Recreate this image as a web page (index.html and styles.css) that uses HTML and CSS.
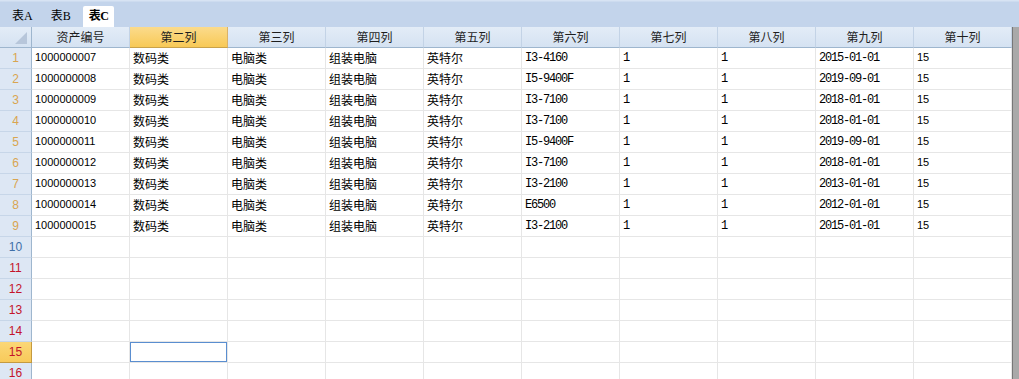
FILE: index.html
```html
<!DOCTYPE html>
<html>

<head>
    <title>表C</title>
    <link rel="stylesheet" href="styles.css">
</head>

<body>

    <div class="tabs">
        <div class="tab">表A</div>
        <div class="tab">表B</div>
        <div class="tab active">表C</div>
    </div>

    <div class="main">
        <div class="sheet">
            <div class="row head">
                <div class="corner">
                    <svg width="12" height="12" viewBox="0 0 12 12"><polygon points="12,0 12,12 0,12" fill="#b7c6da" /></svg>
                </div>
                <div class="col">资产编号</div>
                <div class="col sel">第二列</div>
                <div class="col">第三列</div>
                <div class="col">第四列</div>
                <div class="col">第五列</div>
                <div class="col">第六列</div>
                <div class="col">第七列</div>
                <div class="col">第八列</div>
                <div class="col">第九列</div>
                <div class="col">第十列</div>
            </div>

            <div class="row">
                <div class="num filled">1</div>
                <div class="cell sans">1000000007</div><div class="cell">数码类</div><div class="cell">电脑类</div><div class="cell">组装电脑</div><div class="cell">英特尔</div>
                <div class="cell mono">I3-4160</div><div class="cell mono">1</div><div class="cell mono">1</div><div class="cell mono">2015-01-01</div><div class="cell sans">15</div>
            </div>
            <div class="row">
                <div class="num filled">2</div>
                <div class="cell sans">1000000008</div><div class="cell">数码类</div><div class="cell">电脑类</div><div class="cell">组装电脑</div><div class="cell">英特尔</div>
                <div class="cell mono">I5-9400F</div><div class="cell mono">1</div><div class="cell mono">1</div><div class="cell mono">2019-09-01</div><div class="cell sans">15</div>
            </div>
            <div class="row">
                <div class="num filled">3</div>
                <div class="cell sans">1000000009</div><div class="cell">数码类</div><div class="cell">电脑类</div><div class="cell">组装电脑</div><div class="cell">英特尔</div>
                <div class="cell mono">I3-7100</div><div class="cell mono">1</div><div class="cell mono">1</div><div class="cell mono">2018-01-01</div><div class="cell sans">15</div>
            </div>
            <div class="row">
                <div class="num filled">4</div>
                <div class="cell sans">1000000010</div><div class="cell">数码类</div><div class="cell">电脑类</div><div class="cell">组装电脑</div><div class="cell">英特尔</div>
                <div class="cell mono">I3-7100</div><div class="cell mono">1</div><div class="cell mono">1</div><div class="cell mono">2018-01-01</div><div class="cell sans">15</div>
            </div>
            <div class="row">
                <div class="num filled">5</div>
                <div class="cell sans">1000000011</div><div class="cell">数码类</div><div class="cell">电脑类</div><div class="cell">组装电脑</div><div class="cell">英特尔</div>
                <div class="cell mono">I5-9400F</div><div class="cell mono">1</div><div class="cell mono">1</div><div class="cell mono">2019-09-01</div><div class="cell sans">15</div>
            </div>
            <div class="row">
                <div class="num filled">6</div>
                <div class="cell sans">1000000012</div><div class="cell">数码类</div><div class="cell">电脑类</div><div class="cell">组装电脑</div><div class="cell">英特尔</div>
                <div class="cell mono">I3-7100</div><div class="cell mono">1</div><div class="cell mono">1</div><div class="cell mono">2018-01-01</div><div class="cell sans">15</div>
            </div>
            <div class="row">
                <div class="num filled">7</div>
                <div class="cell sans">1000000013</div><div class="cell">数码类</div><div class="cell">电脑类</div><div class="cell">组装电脑</div><div class="cell">英特尔</div>
                <div class="cell mono">I3-2100</div><div class="cell mono">1</div><div class="cell mono">1</div><div class="cell mono">2013-01-01</div><div class="cell sans">15</div>
            </div>
            <div class="row">
                <div class="num filled">8</div>
                <div class="cell sans">1000000014</div><div class="cell">数码类</div><div class="cell">电脑类</div><div class="cell">组装电脑</div><div class="cell">英特尔</div>
                <div class="cell mono">E6500</div><div class="cell mono">1</div><div class="cell mono">1</div><div class="cell mono">2012-01-01</div><div class="cell sans">15</div>
            </div>
            <div class="row">
                <div class="num filled">9</div>
                <div class="cell sans">1000000015</div><div class="cell">数码类</div><div class="cell">电脑类</div><div class="cell">组装电脑</div><div class="cell">英特尔</div>
                <div class="cell mono">I3-2100</div><div class="cell mono">1</div><div class="cell mono">1</div><div class="cell mono">2015-01-01</div><div class="cell sans">15</div>
            </div>

            <div class="row">
                <div class="num blue">10</div>
                <div class="cell"></div><div class="cell"></div><div class="cell"></div><div class="cell"></div><div class="cell"></div>
                <div class="cell"></div><div class="cell"></div><div class="cell"></div><div class="cell"></div><div class="cell"></div>
            </div>
            <div class="row">
                <div class="num">11</div>
                <div class="cell"></div><div class="cell"></div><div class="cell"></div><div class="cell"></div><div class="cell"></div>
                <div class="cell"></div><div class="cell"></div><div class="cell"></div><div class="cell"></div><div class="cell"></div>
            </div>
            <div class="row">
                <div class="num">12</div>
                <div class="cell"></div><div class="cell"></div><div class="cell"></div><div class="cell"></div><div class="cell"></div>
                <div class="cell"></div><div class="cell"></div><div class="cell"></div><div class="cell"></div><div class="cell"></div>
            </div>
            <div class="row">
                <div class="num">13</div>
                <div class="cell"></div><div class="cell"></div><div class="cell"></div><div class="cell"></div><div class="cell"></div>
                <div class="cell"></div><div class="cell"></div><div class="cell"></div><div class="cell"></div><div class="cell"></div>
            </div>
            <div class="row">
                <div class="num">14</div>
                <div class="cell"></div><div class="cell"></div><div class="cell"></div><div class="cell"></div><div class="cell"></div>
                <div class="cell"></div><div class="cell"></div><div class="cell"></div><div class="cell"></div><div class="cell"></div>
            </div>
            <div class="row">
                <div class="num sel">15</div>
                <div class="cell"></div><div class="cell active"></div><div class="cell"></div><div class="cell"></div><div class="cell"></div>
                <div class="cell"></div><div class="cell"></div><div class="cell"></div><div class="cell"></div><div class="cell"></div>
            </div>
            <div class="row">
                <div class="num">16</div>
                <div class="cell"></div><div class="cell"></div><div class="cell"></div><div class="cell"></div><div class="cell"></div>
                <div class="cell"></div><div class="cell"></div><div class="cell"></div><div class="cell"></div><div class="cell"></div>
            </div>
        </div>
        <div class="edge"></div>
    </div>

</body>

</html>
```

FILE: styles.css
```css
body {
    margin: 0;
    height: 379px;
    overflow: hidden;
    background-color: #fff;
    font-family: "Noto Sans CJK SC", sans-serif;
    font-size: 12px;
    color: #000;
}

.tabs {
    display: flex;
    gap: 6px;
    height: 27px;
    box-sizing: border-box;
    padding: 6px 0 0 6px;
    background: linear-gradient(#d7e3f3 0, #d7e3f3 1px, #c3d4eb 2px, #c3d4eb 100%);
}

.tab {
    padding: 0 6px;
    height: 21px;
    line-height: 20px;
    font-family: "Liberation Serif", "Noto Sans CJK SC", serif;
    font-size: 12px;
    color: #000;
}

.tab.active {
    background-color: #fff;
    font-weight: bold;
    letter-spacing: -0.5px;
    border-radius: 2px 2px 0 0;
}

.main {
    display: flex;
}

.sheet {
    display: grid;
    grid-template-columns: 32px repeat(10, 98px);
    grid-auto-rows: 21px;
}

.row {
    display: contents;
}

.head > div {
    box-sizing: border-box;
    background: linear-gradient(#e3ecf7, #d5e2f2);
    border-right: 1px solid #c3d3e6;
    border-bottom: 1px solid #9eb6ce;
    text-align: center;
    line-height: 20px;
    color: #1e1e1e;
}

.head .corner {
    display: flex;
    align-items: flex-end;
    justify-content: flex-end;
    padding: 0 4px 3px 0;
    border-right: 1px solid #9eb6ce;
}

.head .sel {
    background: linear-gradient(#fbdb8c, #f8c956);
    border-bottom-color: #c9a24a;
    border-right-color: #d9b26a;
}

.num {
    box-sizing: border-box;
    background-color: #dde7f4;
    border-right: 1px solid #9eb6ce;
    border-bottom: 1px solid #c7d6e8;
    text-align: center;
    line-height: 20px;
    font-family: "Liberation Sans", sans-serif;
    font-size: 12px;
    color: #c4142a;
}

.num.filled {
    color: #d9a550;
}

.num.blue {
    color: #3f6fa8;
}

.num.sel {
    background: linear-gradient(#fbd777, #f8ca5a);
    border-right-color: #c49a40;
    border-bottom-color: #c49a40;
}

.cell {
    box-sizing: border-box;
    border-right: 1px solid #e6e6e6;
    border-bottom: 1px solid #e6e6e6;
    padding: 0 3px;
    line-height: 20px;
    white-space: nowrap;
    overflow: hidden;
}

.cell.sans {
    font-family: "Liberation Sans", sans-serif;
    font-size: 11px;
    line-height: 19px;
}

.cell.mono {
    font-family: "Liberation Mono", monospace;
    font-size: 12px;
    letter-spacing: -1.2px;
    padding-top: 1px;
    line-height: 19px;
}

.cell.active {
    box-shadow: inset 0 0 0 1px #5a8ed0;
}

.edge {
    flex: 1;
    background-color: #a9a9a9;
    border-left: 1px solid #777;
}
```
